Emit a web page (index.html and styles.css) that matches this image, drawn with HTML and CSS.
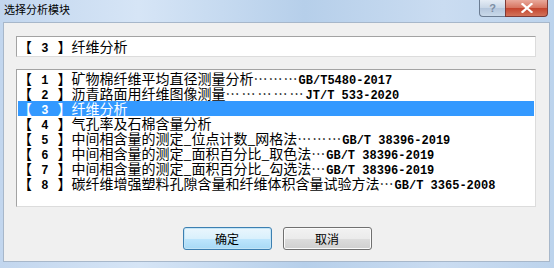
FILE: index.html
```html
<!DOCTYPE html>
<html lang="zh-CN">
<head>
    <meta charset="UTF-8">
    <title>选择分析模块</title>
    <link rel="stylesheet" href="styles.css">
</head>
<body>
    <div class="window">
        <!-- Title bar -->
        <div class="titlebar">
            <span class="title">选择分析模块</span>
            <div class="caption-buttons">
                <span class="cap-btn help">?</span>
                <span class="cap-btn close">
                    <svg width="12" height="10" viewBox="0 0 12 10">
                        <path d="M1.5 1 L10.5 9 M10.5 1 L1.5 9" stroke="#ffffff" stroke-width="2.2" stroke-linecap="square"/>
                    </svg>
                </span>
            </div>
        </div>

        <!-- Client area -->
        <div class="client">
            <div class="current"><span class="num">【<b> 3 </b>】</span>纤维分析</div>

            <ul class="module-list">
                <li><span class="num">【<b> 1 </b>】</span>矿物棉纤维平均直径测量分析<span class="dots">………</span><b class="code">GB/T5480-2017</b></li>
                <li><span class="num">【<b> 2 </b>】</span>沥青路面用纤维图像测量<span class="dots wide">……………</span><b class="code">JT/T 533-2020</b></li>
                <li class="selected"><span class="num">【<b> 3 </b>】</span>纤维分析</li>
                <li><span class="num">【<b> 4 </b>】</span>气孔率及石棉含量分析</li>
                <li><span class="num">【<b> 5 </b>】</span>中间相含量的测定_位点计数_网格法<span class="dots">………</span><b class="code">GB/T 38396-2019</b></li>
                <li><span class="num">【<b> 6 </b>】</span>中间相含量的测定_面积百分比_取色法<span class="dots">…</span><b class="code">GB/T 38396-2019</b></li>
                <li><span class="num">【<b> 7 </b>】</span>中间相含量的测定_面积百分比_勾选法<span class="dots">…</span><b class="code">GB/T 38396-2019</b></li>
                <li><span class="num">【<b> 8 </b>】</span>碳纤维增强塑料孔隙含量和纤维体积含量试验方法<span class="dots">…</span><b class="code">GB/T 3365-2008</b></li>
            </ul>

            <div class="actions">
                <button type="button" class="btn default">确定</button>
                <button type="button" class="btn">取消</button>
            </div>
        </div>
    </div>
</body>
</html>
```

FILE: styles.css
```css
body {
    margin: 0;
    padding: 0;
    font-family: "Noto Sans CJK SC", sans-serif;
    background: #c4d9ef;
    -webkit-font-smoothing: antialiased;
}
.window {
    width: 554px;
    height: 268px;
    background: linear-gradient(90deg, #c2d6ee, #d6e5f6 25%, #b6cfea 55%, #cadcf1 80%, #bcd3ec);
    box-sizing: border-box;
}
.titlebar {
    height: 22px;
    display: flex;
    align-items: flex-start;
}
.title {
    font-size: 11px;
    line-height: 18px;
    padding-left: 4px;
    color: #000000;
}
.caption-buttons {
    margin-left: auto;
    margin-right: 6px;
    display: flex;
}
.cap-btn {
    height: 17px;
    display: flex;
    align-items: center;
    justify-content: center;
    box-sizing: border-box;
    border: 1px solid #6b7c92;
    border-top: none;
}
.cap-btn.help {
    width: 26px;
    border-right: none;
    border-radius: 0 0 0 4px;
    background: linear-gradient(#e4ecf5, #c8d6e6 50%, #b4c6dc 51%, #c9d9ea);
    color: #7d8ea4;
    font: bold 11px "Liberation Sans", sans-serif;
}
.cap-btn.close {
    width: 43px;
    border-color: #7e3a36;
    border-radius: 0 0 4px 0;
    background: linear-gradient(#e9a99c, #d6735f 50%, #c4432d 51%, #d2735a);
}
.client {
    margin-left: 3px;
    width: 547px;
    height: 240px;
    box-sizing: border-box;
    border: 1px solid #a7b7ca;
    background: #f0f0f0;
    padding: 13px 0 0 12px;
}
.current {
    width: 520px;
    height: 21px;
    box-sizing: border-box;
    border: 1px solid;
    border-color: #a3a3a3 #dcdcdc #dcdcdc #a3a3a3;
    background: #ffffff;
    font-size: 14px;
    line-height: 19px;
    padding-left: 1px;
    white-space: nowrap;
    color: #000000;
}
.num b {
    font: bold 12px "Liberation Mono", monospace;
    padding: 0 2px;
}
.module-list {
    list-style: none;
    margin: 12px 0 0 0;
    padding: 1px;
    width: 520px;
    height: 138px;
    box-sizing: border-box;
    border: 1px solid;
    border-color: #a3a3a3 #dcdcdc #dcdcdc #a3a3a3;
    background: #ffffff;
    font-size: 14px;
}
.module-list li {
    height: 15px;
    line-height: 15px;
    white-space: nowrap;
    color: #000000;
}
.module-list li.selected {
    background: #3399ff;
    color: #ffffff;
}
.dots {
    letter-spacing: 1px;
}
.dots.wide {
    letter-spacing: 2px;
}
.code {
    font: bold 12px "Liberation Mono", monospace;
}
.actions {
    display: flex;
    justify-content: center;
    gap: 11px;
    margin-top: 20px;
    padding-right: 11px;
}
.btn {
    width: 89px;
    height: 23px;
    font-family: "Noto Sans CJK SC", sans-serif;
    font-size: 12px;
    color: #000000;
    border: 1px solid #707070;
    border-radius: 3px;
    background: linear-gradient(#f2f2f2, #ebebeb 50%, #dddddd 51%, #cfcfcf);
    box-shadow: inset 0 0 0 1px #fbfbfb;
    padding: 0;
}
.btn.default {
    border-color: #3c7fb1;
    background: linear-gradient(#eaf6fd, #d9f0fc 50%, #bee6fd 51%, #a7d9f5);
    box-shadow: inset 0 0 0 1px #c2e4f6;
}
```
